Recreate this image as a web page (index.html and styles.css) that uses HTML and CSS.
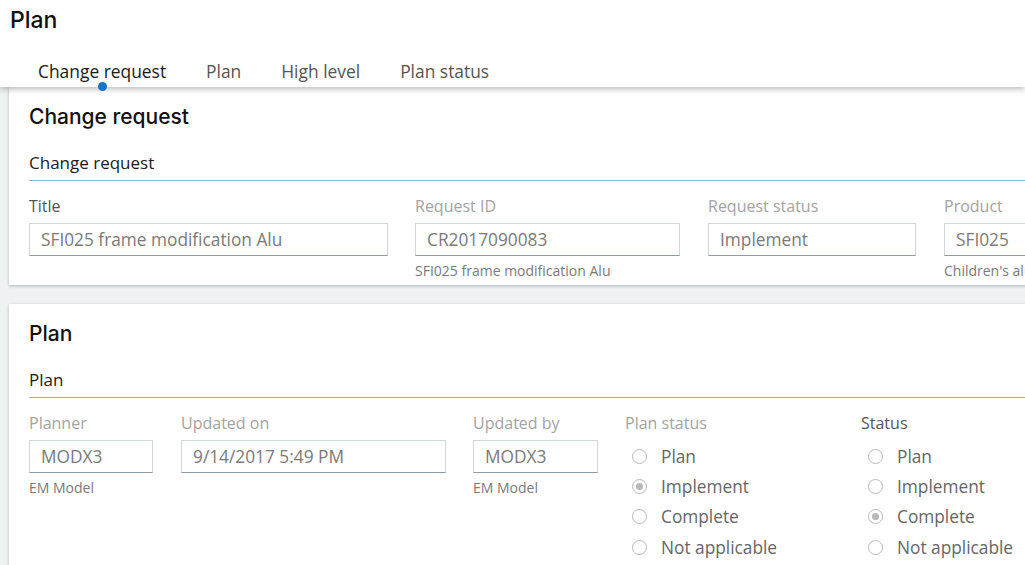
FILE: index.html
```html
<!DOCTYPE html>
<html lang="en">
<head>
  <meta charset="UTF-8">
  <title>Plan</title>
  <link rel="stylesheet" href="styles.css">
</head>
<body>
  <header class="top">
    <h1 class="page-title">Plan</h1>
    <ul class="tabs">
      <li class="tab active">Change request</li>
      <li class="tab">Plan</li>
      <li class="tab">High level</li>
      <li class="tab">Plan status</li>
    </ul>
  </header>
  <main class="content">
    <section class="card card-request">
      <h2 class="card-title">Change request</h2>
      <h3 class="group-title">Change request</h3>
      <div class="fields">
        <div class="field f-title">
          <label class="label strong">Title</label>
          <div class="input">SFI025 frame modification Alu</div>
        </div>
        <div class="field f-reqid">
          <label class="label">Request ID</label>
          <div class="input">CR2017090083</div>
          <div class="help">SFI025 frame modification Alu</div>
        </div>
        <div class="field f-reqstatus">
          <label class="label">Request status</label>
          <div class="input">Implement</div>
        </div>
        <div class="field f-product">
          <label class="label">Product</label>
          <div class="input">SFI025</div>
          <div class="help">Children's aluminium frame</div>
        </div>
      </div>
    </section>

    <section class="card card-plan">
      <h2 class="card-title">Plan</h2>
      <h3 class="group-title">Plan</h3>
      <div class="fields">
        <div class="field f-planner">
          <label class="label">Planner</label>
          <div class="input">MODX3</div>
          <div class="help">EM Model</div>
        </div>
        <div class="field f-updated">
          <label class="label">Updated on</label>
          <div class="input">9/14/2017 5:49 PM</div>
        </div>
        <div class="field f-by">
          <label class="label">Updated by</label>
          <div class="input">MODX3</div>
          <div class="help">EM Model</div>
        </div>
        <div class="field f-planstatus">
          <label class="label">Plan status</label>
          <ul class="radios">
            <li><span class="radio"></span>Plan</li>
            <li><span class="radio checked"></span>Implement</li>
            <li><span class="radio"></span>Complete</li>
            <li><span class="radio"></span>Not applicable</li>
          </ul>
        </div>
        <div class="field f-status">
          <label class="label strong">Status</label>
          <ul class="radios">
            <li><span class="radio"></span>Plan</li>
            <li><span class="radio"></span>Implement</li>
            <li><span class="radio checked"></span>Complete</li>
            <li><span class="radio"></span>Not applicable</li>
          </ul>
        </div>
      </div>
    </section>
  </main>
</body>
</html>
```

FILE: styles.css
```css
html, body {
  margin: 0;
  padding: 0;
}
body {
  width: 1025px;
  height: 565px;
  overflow: hidden;
  background: #eff2f3;
  font-family: "Open Sans", Arial, sans-serif;
  color: #333;
}
.top {
  position: relative;
  z-index: 2;
  height: 87px;
  background: #fff;
  box-shadow: 0 2px 6px rgba(0, 0, 0, 0.28);
}
.page-title {
  margin: 0;
  padding: 5px 0 0 10px;
  font-family: Inter, "Liberation Sans", sans-serif;
  font-size: 23px;
  font-weight: 500;
  line-height: 30px;
  color: #111;
}
.tabs {
  display: flex;
  gap: 40px;
  margin: 0;
  padding: 24px 0 0 38px;
  list-style: none;
}
.tab {
  position: relative;
  font-size: 17.4px;
  line-height: 24px;
  color: #555;
}
.tab.active {
  color: #1a1a1a;
}
.tab.active::after {
  content: "";
  position: absolute;
  left: 50%;
  top: 23px;
  width: 9px;
  height: 9px;
  margin-left: -4.5px;
  border-radius: 50%;
  background: #1874c8;
}
.content {
  padding-left: 9px;
}
.card {
  width: 1100px;
  box-sizing: border-box;
  background: #fff;
  padding: 16px 20px 0 20px;
  box-shadow: 0 1px 3px rgba(0, 0, 0, 0.25);
}
.card-request {
  height: 198px;
}
.card-plan {
  margin-top: 19px;
  height: 300px;
}
.card-title {
  margin: 0;
  font-family: Inter, "Liberation Sans", sans-serif;
  font-size: 21px;
  font-weight: 500;
  line-height: 28px;
  color: #111;
}
.group-title {
  margin: 21px 0 0;
  padding-bottom: 6px;
  font-size: 17px;
  font-weight: 500;
  line-height: 22px;
  color: #1a1a1a;
  border-bottom: 1px solid #8fb6c9;
}
.fields {
  display: flex;
  margin-top: 14px;
}
.field {
  flex: none;
}
.label {
  display: block;
  font-size: 16px;
  line-height: 22px;
  color: #a3a3a3;
}
.label.strong {
  color: #555;
}
.input {
  box-sizing: border-box;
  height: 33px;
  margin-top: 6px;
  padding: 0 11px;
  border: 1px solid #cfd6da;
  border-bottom-color: #8c9ba4;
  font-size: 17.3px;
  line-height: 31px;
  color: #7a7a7a;
  white-space: nowrap;
  overflow: hidden;
}
.help {
  margin-top: 4px;
  font-size: 14px;
  line-height: 22px;
  color: #7a7a7a;
  white-space: nowrap;
}
.f-title { width: 359px; margin-right: 27px; }
.f-reqid { width: 265px; margin-right: 28px; }
.f-reqstatus { width: 208px; margin-right: 28px; }
.f-product { width: 200px; }
.f-planner { width: 124px; margin-right: 28px; }
.f-updated { width: 265px; margin-right: 27px; }
.f-by { width: 125px; margin-right: 27px; }
.f-planstatus { width: 236px; }
.f-status { width: 200px; }
.radios {
  margin: 0;
  padding: 7px 0 0 7px;
  list-style: none;
}
.radios li {
  display: flex;
  align-items: center;
  height: 30.4px;
  font-size: 17.3px;
  color: #666;
}
.radio {
  box-sizing: border-box;
  width: 15px;
  height: 15px;
  margin-right: 14px;
  border: 1px solid #b9b9b9;
  border-radius: 50%;
  display: flex;
  align-items: center;
  justify-content: center;
}
.radio.checked::after {
  content: "";
  width: 7px;
  height: 7px;
  border-radius: 50%;
  background: #b8b8b8;
}
```
